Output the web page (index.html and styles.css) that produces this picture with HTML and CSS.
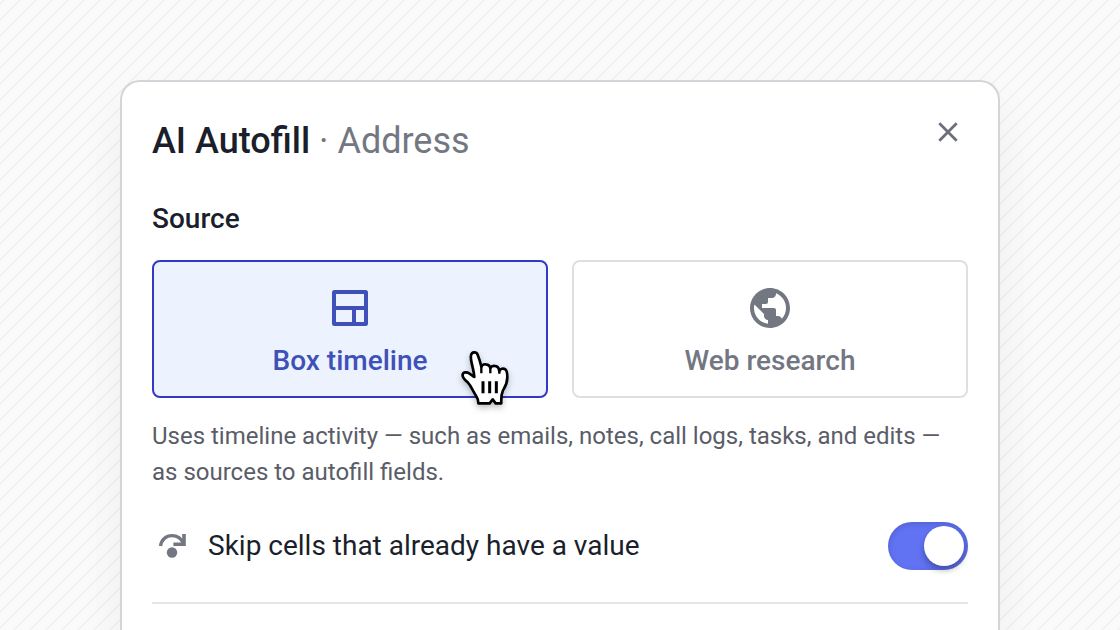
FILE: index.html
```html
<!DOCTYPE html>
<html lang="en">
<head>
    <meta charset="UTF-8">
    <meta name="viewport" content="width=device-width, initial-scale=1.0">
    <title>AI Autofill</title>
    <link rel="stylesheet" href="styles.css">
</head>
<body>
    <main class="dialog">
        <header class="dialog-header">
            <h1>AI Autofill <span class="field-name">· Address</span></h1>
            <button class="close-button" type="button" aria-label="Close">
                <svg width="40" height="40" viewBox="0 0 40 40" fill="none" stroke="currentColor" stroke-width="2.8">
                    <path d="M11.3 11.3l17.4 17.4M28.7 11.3l-17.4 17.4"/>
                </svg>
            </button>
        </header>

        <fieldset class="source">
            <legend>Source</legend>
            <div class="options">
                <label class="option">
                    <input type="radio" name="source" value="timeline" checked>
                    <svg width="48" height="48" viewBox="0 0 48 48" fill="none" stroke="currentColor" stroke-width="4">
                        <rect x="8" y="8" width="32" height="32" rx="0.5"/>
                        <path d="M8 24h32M28 24v16"/>
                    </svg>
                    <span>Box timeline</span>
                    <!-- Pointer -->
                    <svg class="cursor" width="50" height="56" viewBox="60 60 150 168" stroke="#000" stroke-linecap="round" stroke-linejoin="round">
                        <path fill="#fff" stroke-width="8" d="M124 110C121 97 117 84 113 74C109 64 95 65 93 76C91 84 94 94 96 104C99 116 102 128 103 141C98 139 94 134 87 130C82 126 66 124 68 137C68 144 79 153 84 158C94 169 99 184 108 197C113 204 115 211 115 220L149 220L158 208L167 220L184 220C183 201 185 190 189 181C196 170 202 162 202 142C202 131 202 122 196 118C190 114 181 116 178 123C177 115 175 111 169 109C163 107 155 107 151 114C150 109 147 105 141 104C135 102 127 103 124 110Z"/>
                        <path fill="none" stroke-width="7" stroke-linecap="butt" d="M124 108v22M151 112v18M178 121v10"/>
                        <path fill="none" stroke-width="9" stroke-linecap="butt" d="M129 154v36M149 154v36M169 154v36"/>
                    </svg>
                </label>
                <label class="option">
                    <input type="radio" name="source" value="web">
                    <svg width="48" height="48" viewBox="0 0 24 24" fill="currentColor">
                        <path d="M12 2C6.48 2 2 6.48 2 12s4.48 10 10 10 10-4.48 10-10S17.52 2 12 2zm-1 17.93c-3.95-.49-7-3.85-7-7.93 0-.62.08-1.21.21-1.79L9 15v1c0 1.1.9 2 2 2v1.93zm6.9-2.54c-.26-.81-1-1.39-1.9-1.39h-1v-3c0-.55-.45-1-1-1H8v-2h2c.55 0 1-.45 1-1V7h2c1.1 0 2-.9 2-2v-.41c2.93 1.19 5 4.06 5 7.41 0 2.08-.8 3.97-2.1 5.39z"/>
                    </svg>
                    <span>Web research</span>
                </label>
            </div>
        </fieldset>

        <p class="description">Uses timeline activity — such as emails, notes, call logs, tasks, and edits — as sources to autofill fields.</p>

        <div class="setting">
            <svg width="40" height="40" viewBox="0 0 40 40" fill="none" stroke="currentColor">
                <path stroke-width="3.4" d="M8.5 20C9.3 13.8 14 9.6 20 9.6C25.4 9.6 29.5 12.8 31.5 17.5"/>
                <path stroke-width="3.6" d="M32 8v10.3H21.4"/>
                <circle cx="20" cy="26.5" r="5.2" fill="currentColor" stroke="none"/>
            </svg>
            <label for="skipCells">Skip cells that already have a value</label>
            <input class="toggle" type="checkbox" role="switch" id="skipCells" checked>
        </div>
    </main>
</body>
</html>
```
FILE: styles.css
```css
* {
    margin: 0;
    padding: 0;
    box-sizing: border-box;
}

body {
    font-family: Roboto, "Liberation Sans", sans-serif;
    min-height: 100vh;
    display: flex;
    padding: 80px 120px 0;
    color: #1b1f2b;
    background-color: #fafafa;
    background-image: linear-gradient(135deg, #fafafa 8%, #efefef 11%, #efefef 14%, #fafafa 17%, #fafafa 58%, #efefef 61%, #efefef 64%, #fafafa 67%);
    background-size: 16px 16px;
}

.dialog {
    flex: 1;
    padding: 36px 30px 26px;
    background: #fff;
    border: 2px solid #d4d4da;
    border-bottom: none;
    border-radius: 20px 20px 0 0;
    box-shadow: 0 24px 48px rgba(0, 0, 0, 0.05);
}

.dialog-header {
    display: flex;
    justify-content: space-between;
    align-items: flex-start;
    margin-bottom: 38px;
}

h1 {
    font-size: 36px;
    line-height: 46px;
    font-weight: 500;
}

.field-name {
    font-weight: 400;
    color: #737782;
}

.close-button {
    display: flex;
    margin-top: -6px;
    border: none;
    background: none;
    color: #6b707c;
    cursor: pointer;
}

.source {
    border: none;
}

legend {
    font-size: 28px;
    line-height: 34px;
    font-weight: 500;
    margin-bottom: 24px;
}

.options {
    display: grid;
    grid-template-columns: 1fr 1fr;
    gap: 24px;
}

.option {
    position: relative;
    display: flex;
    flex-direction: column;
    align-items: center;
    gap: 12px;
    padding: 22px 16px 18px;
    border: 2px solid #dfdfe2;
    border-radius: 8px;
    font-size: 28px;
    line-height: 34px;
    font-weight: 500;
    color: #737782;
    cursor: pointer;
}

.option:has(input:checked) {
    background: #ecf3ff;
    border-color: #3338c5;
    color: #3f51b8;
}

.option input {
    position: absolute;
    opacity: 0;
}

.cursor {
    position: absolute;
    right: 36px;
    bottom: -10px;
    filter: drop-shadow(0 3px 3px rgba(0, 0, 0, 0.25));
}

.description {
    margin-top: 20px;
    font-size: 24px;
    line-height: 36px;
    color: #5a5d68;
}

.setting {
    display: flex;
    align-items: center;
    gap: 16px;
    padding: 32px 0;
    border-bottom: 2px solid #e6e6e8;
    font-size: 28px;
    color: #737782;
}

.setting label {
    flex: 1;
    padding-bottom: 2px;
    color: #1b1f2b;
}

.toggle {
    appearance: none;
    display: flex;
    width: 80px;
    height: 48px;
    padding: 4px;
    border-radius: 24px;
    background: #c4c6cf;
    box-shadow: inset 0 2px 6px rgba(0, 0, 0, 0.15);
    cursor: pointer;
}

.toggle::before {
    content: "";
    width: 40px;
    height: 40px;
    border-radius: 50%;
    background: #fff;
    box-shadow: 0 4px 6px rgba(0, 0, 0, 0.3);
}

.toggle:checked {
    justify-content: flex-end;
    background: #6172f3;
}
```
